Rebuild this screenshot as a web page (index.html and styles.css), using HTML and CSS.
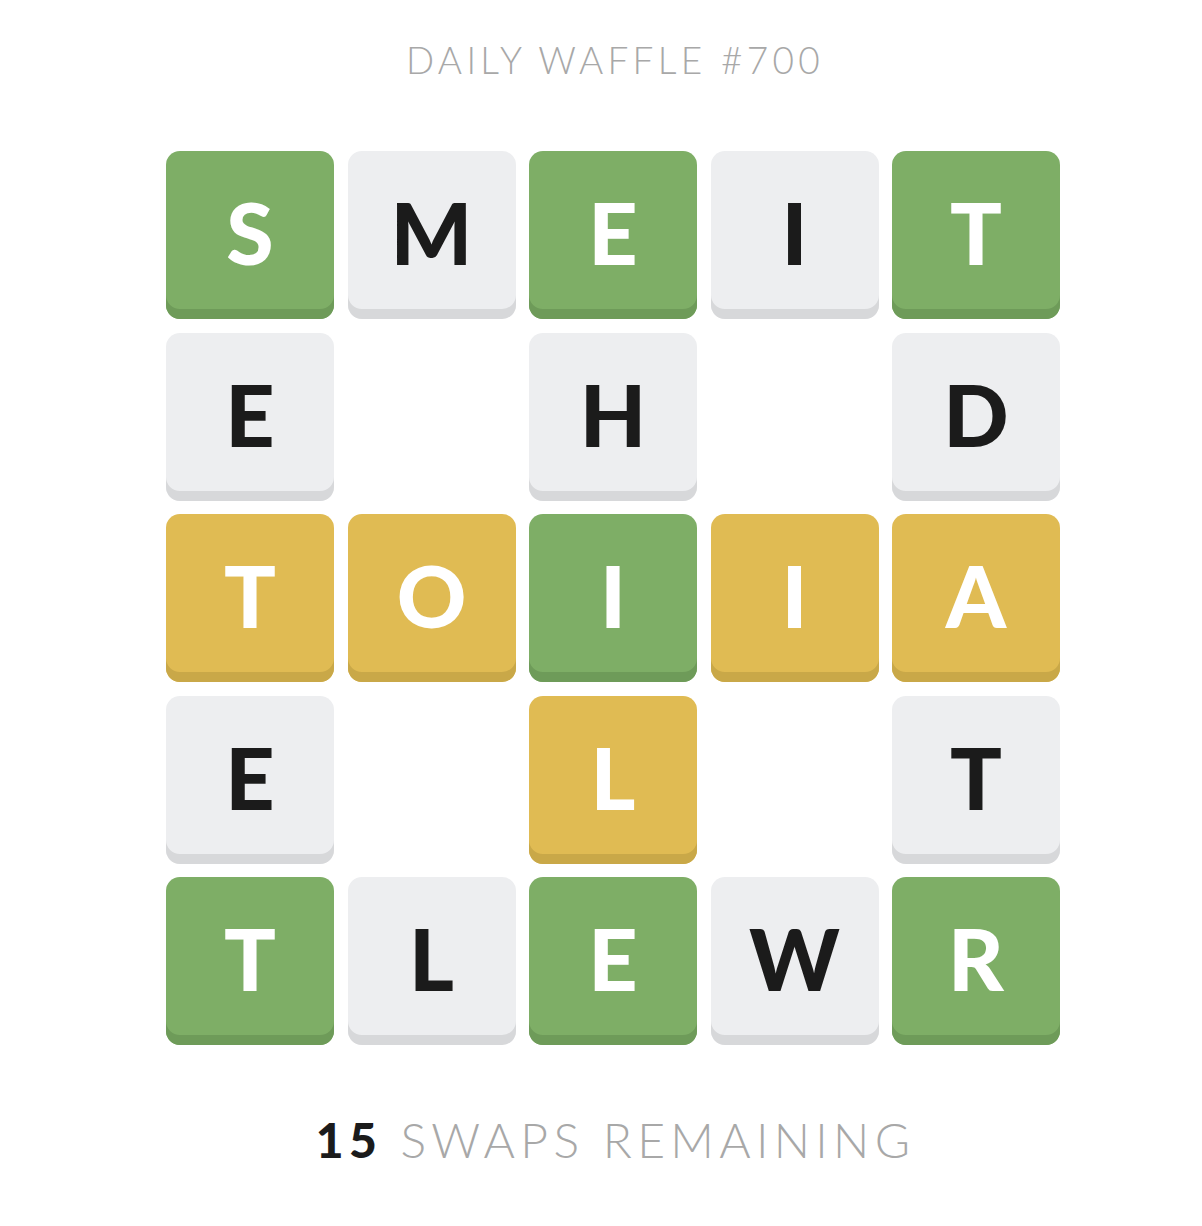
FILE: index.html
```html
<!DOCTYPE html>
<html>
<head>
<meta charset="utf-8">
<link rel="stylesheet" href="styles.css">
</head>
<body>
<main class="page">
  <h1 class="title">DAILY WAFFLE #700</h1>
  <div class="board">
    <div class="tile green">S</div>
    <div class="tile grey">M</div>
    <div class="tile green">E</div>
    <div class="tile grey">I</div>
    <div class="tile green">T</div>

    <div class="tile grey">E</div>
    <div class="blank"></div>
    <div class="tile grey">H</div>
    <div class="blank"></div>
    <div class="tile grey">D</div>

    <div class="tile yellow">T</div>
    <div class="tile yellow">O</div>
    <div class="tile green">I</div>
    <div class="tile yellow">I</div>
    <div class="tile yellow">A</div>

    <div class="tile grey">E</div>
    <div class="blank"></div>
    <div class="tile yellow">L</div>
    <div class="blank"></div>
    <div class="tile grey">T</div>

    <div class="tile green">T</div>
    <div class="tile grey">L</div>
    <div class="tile green">E</div>
    <div class="tile grey">W</div>
    <div class="tile green">R</div>
  </div>
  <p class="swaps"><span class="count">15</span> SWAPS REMAINING</p>
</main>
</body>
</html>
```

FILE: styles.css
```css
html, body {
  margin: 0;
  padding: 0;
  background: #ffffff;
}

.page {
  width: 1202px;
  box-sizing: border-box;
  padding-left: 24px;
  display: flex;
  flex-direction: column;
  align-items: center;
}

.title {
  margin: 38px 0 0 0;
  padding-left: 4px;
  font-family: "Lato", sans-serif;
  font-weight: 300;
  font-size: 37px;
  line-height: 44px;
  letter-spacing: 4.3px;
  color: #a8a8a8;
}

.board {
  margin-top: 69px;
  display: grid;
  grid-template-columns: repeat(5, 168px);
  grid-auto-rows: 168px;
  column-gap: 13.5px;
  row-gap: 13.5px;
}

.tile {
  border-radius: 14px;
  display: flex;
  align-items: center;
  justify-content: center;
  padding-bottom: 6px;
  box-sizing: border-box;
  font-family: "Lato", sans-serif;
  font-weight: 900;
  font-size: 86px;
  line-height: 1;
}

.green {
  background: #7eae66;
  color: #ffffff;
  box-shadow: inset 0 -10px 0 #6e9b59;
}

.yellow {
  background: #e0bb53;
  color: #ffffff;
  box-shadow: inset 0 -10px 0 #c9a848;
}

.grey {
  background: #edeef0;
  color: #1b1b1b;
  box-shadow: inset 0 -10px 0 #d7d8da;
}

.swaps {
  margin: 67px 0 0 0;
  padding-left: 5px;
  font-family: "Lato", sans-serif;
  font-weight: 300;
  font-size: 48px;
  line-height: 56px;
  letter-spacing: 5.3px;
  color: #a8a8a8;
}

.count {
  font-weight: 900;
  color: #1b1b1b;
}
```
